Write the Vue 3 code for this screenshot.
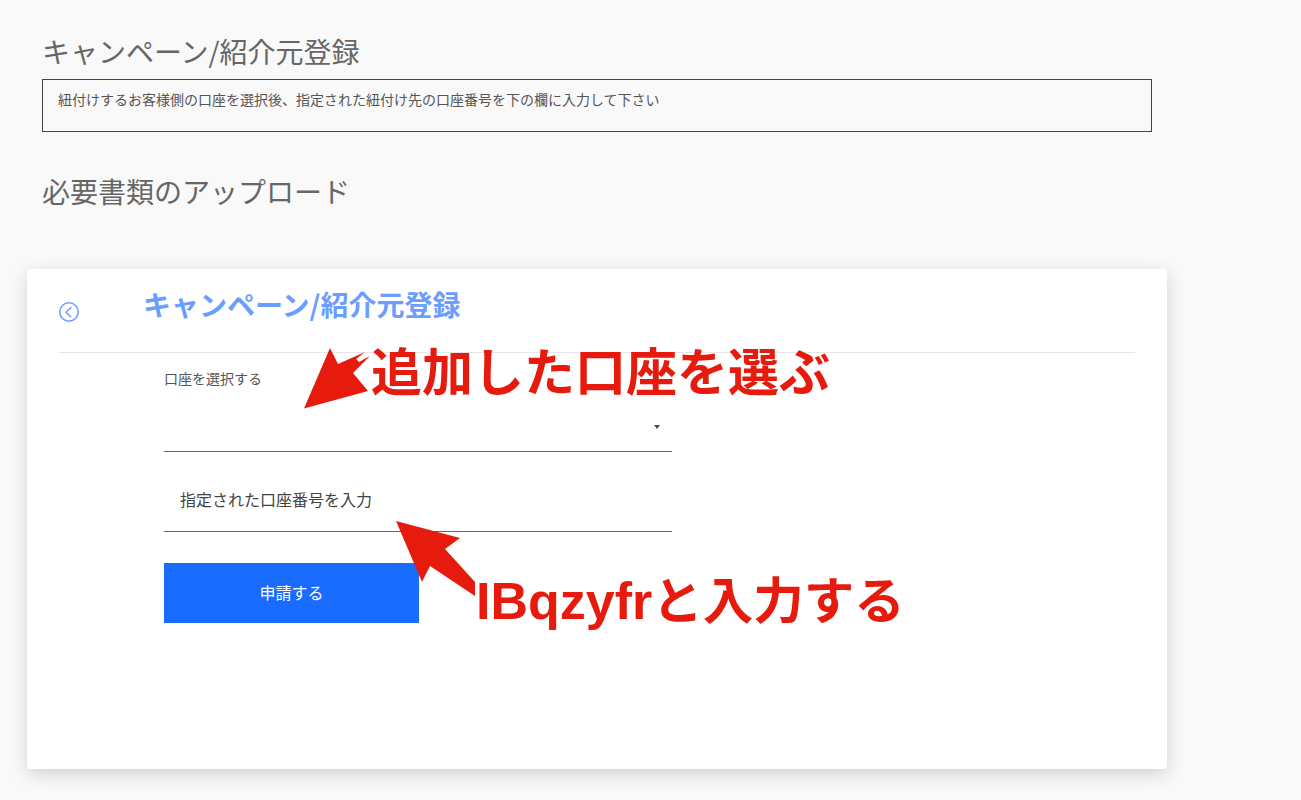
<script setup>
</script>

<template>
  <div class="page">
    <section class="intro">
      <h2 class="heading">キャンペーン/紹介元登録</h2>
      <div class="notice">紐付けするお客様側の口座を選択後、指定された紐付け先の口座番号を下の欄に入力して下さい</div>
      <h2 class="heading second">必要書類のアップロード</h2>
    </section>

    <section class="card">
      <header class="card-head">
        <svg class="back" width="20" height="20" viewBox="0 0 20 20" fill="none" stroke="#6b9dff">
          <circle cx="10" cy="10" r="9.2" stroke-width="1.5" />
          <path d="M12.5 5.3 7 10.3l5.2 5" stroke-width="1.5" />
        </svg>
        <h3 class="card-title">キャンペーン/紹介元登録</h3>
      </header>
      <form class="form" @submit.prevent>
        <div class="select-field">
          <div class="select-label">口座を選択する</div>
          <span class="caret"></span>
        </div>
        <div class="input-field">指定された口座番号を入力</div>
        <button class="submit" type="button">申請する</button>
      </form>
    </section>

    <div class="note note-a">追加した口座を選ぶ</div>
    <div class="note note-b"><span class="latin">IBqzyfr</span>と入力する</div>
    <svg class="arrows" width="1301" height="800" viewBox="0 0 1301 800">
      <polygon fill="#e71b0d" points="304,408.5 330,348 338,364 365,352 356,359 359,362 370,356 353,373 368,391" />
      <polygon fill="#e71b0d" points="396,521 460,538 445,549 475,582 475,596 430,566 422,582" />
    </svg>
  </div>
</template>

<style>
html, body { margin: 0; background: #f9f9f9; }
</style>

<style scoped>
.page {
  position: relative;
  height: 800px;
  overflow: hidden;
  background: #f9f9f9;
  font-family: "Noto Sans CJK JP", "Noto Sans", sans-serif;
  color: #444;
}
.intro {
  padding: 30px 149px 0 42px;
}
.heading {
  margin: 0;
  font-size: 28px;
  line-height: 42px;
  font-weight: 400;
  color: #666;
}
.notice {
  margin-top: 7px;
  height: 51px;
  border: 1px solid #444;
  padding: 0 15px;
  font-size: 14px;
  line-height: 38px;
  font-weight: 400;
  color: #555;
}
.second {
  margin-top: 38px;
}
.card {
  position: relative;
  margin: 57px 0 0 27px;
  width: 1140px;
  height: 500px;
  box-sizing: border-box;
  padding: 0 32px;
  background: #fff;
  border-radius: 4px;
  box-shadow: 0 5px 18px rgba(0, 0, 0, 0.16);
}
.card-head {
  display: flex;
  align-items: flex-start;
  height: 84px;
  border-bottom: 1px solid #e6e6e6;
  box-sizing: border-box;
}
.back {
  margin-top: 33px;
}
.card-title {
  margin: 14px 0 0 64px;
  font-size: 28px;
  line-height: 42px;
  font-weight: 700;
  color: #6b9dff;
}
.form {
  width: 508px;
  margin-left: 105px;
}
.select-field {
  position: relative;
  height: 99px;
  box-sizing: border-box;
  border-bottom: 1px solid #666;
}
.select-label {
  padding-top: 15px;
  font-size: 14px;
  line-height: 20px;
  font-weight: 400;
  color: #555;
}
.caret {
  position: absolute;
  right: 12px;
  top: 72px;
  border-left: 3.5px solid transparent;
  border-right: 3.5px solid transparent;
  border-top: 4px solid #444a55;
}
.input-field {
  height: 80px;
  box-sizing: border-box;
  padding: 0 16px;
  border-bottom: 1px solid #666;
  font-size: 16px;
  line-height: 94px;
  font-weight: 400;
  color: #444;
}
.submit {
  display: block;
  width: 255px;
  height: 60px;
  margin-top: 31px;
  padding: 0 0 2px;
  border: 0;
  background: #1a6cff;
  color: #fff;
  font-family: inherit;
  font-size: 16px;
  font-weight: 400;
}
.note {
  position: absolute;
  white-space: nowrap;
  font-weight: 700;
  color: #e71b0d;
}
.note-a {
  left: 371px;
  top: 332px;
  font-size: 51px;
  line-height: 74px;
}
.note-b {
  left: 476px;
  top: 560px;
  font-size: 50.5px;
  line-height: 74px;
}
.latin {
  font-family: "Liberation Sans", sans-serif;
  font-size: 52px;
}
.arrows {
  position: absolute;
  left: 0;
  top: 0;
  pointer-events: none;
}
</style>
